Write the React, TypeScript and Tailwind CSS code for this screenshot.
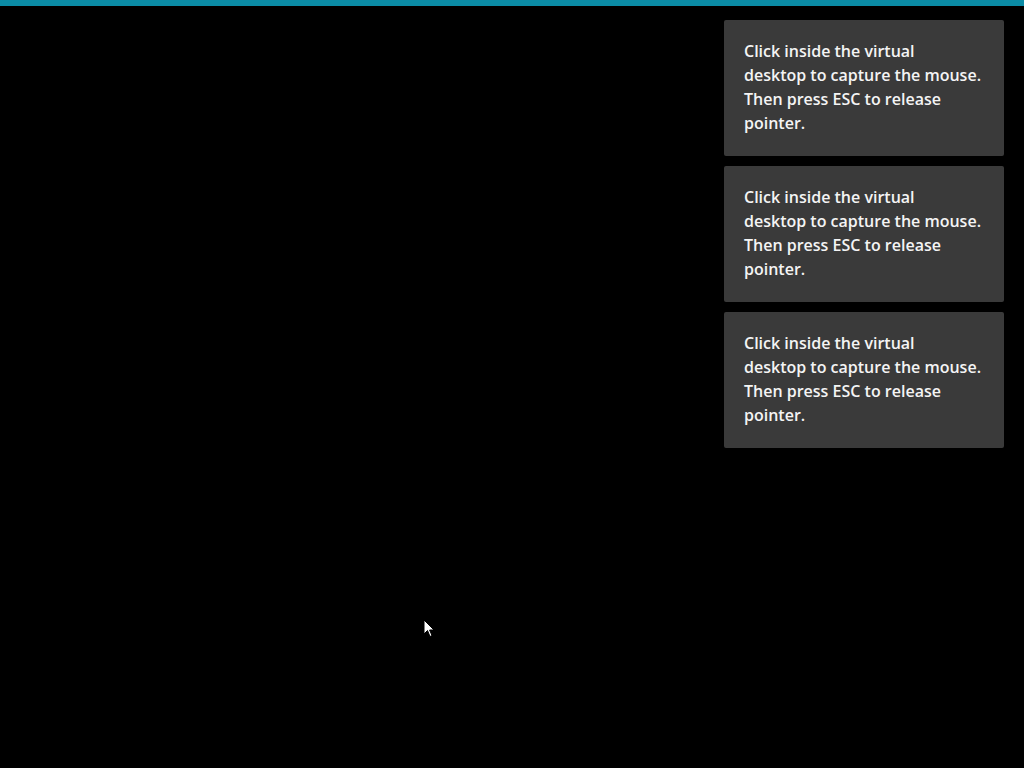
import React from 'react';

const LINES = [
  'Click inside the virtual',
  'desktop to capture the mouse.',
  'Then press ESC to release',
  'pointer.',
];

const Toast: React.FC<{ lines: string[] }> = ({ lines }) => (
  <div className="w-[280px] rounded-[2px] bg-[#3a3a3a] px-5 pt-[19px] pb-[21px] text-[16px] font-semibold leading-6 text-[#f4f4f4]">
    {lines.map((line, i) => (
      <div key={i} className="whitespace-nowrap">
        {line}
      </div>
    ))}
  </div>
);

export default function App() {
  return (
    <div
      className="relative flex h-[768px] w-[1024px] flex-col overflow-hidden bg-black"
      style={{ fontFamily: '"Open Sans", "DejaVu Sans", sans-serif' }}
    >
      {/* Top accent bar */}
      <div className="h-[6px] w-full bg-[#0b8ca6]" />

      {/* Notifications */}
      <div className="flex flex-col items-end gap-[10px] pr-5 pt-[14px]">
        {[0, 1, 2].map((i) => (
          <Toast key={i} lines={LINES} />
        ))}
      </div>

      {/* Mouse pointer */}
      <svg
        className="absolute left-[423px] top-[619px]"
        width="12"
        height="19"
        viewBox="0 0 12 19"
      >
        <path d="M1 1 L1 15 L4.5 11.5 L7 17.5 L9 16.6 L6.6 11 L11 11 Z" fill="#ffffff" stroke="#000000" strokeWidth="1" />
      </svg>
    </div>
  );
}
